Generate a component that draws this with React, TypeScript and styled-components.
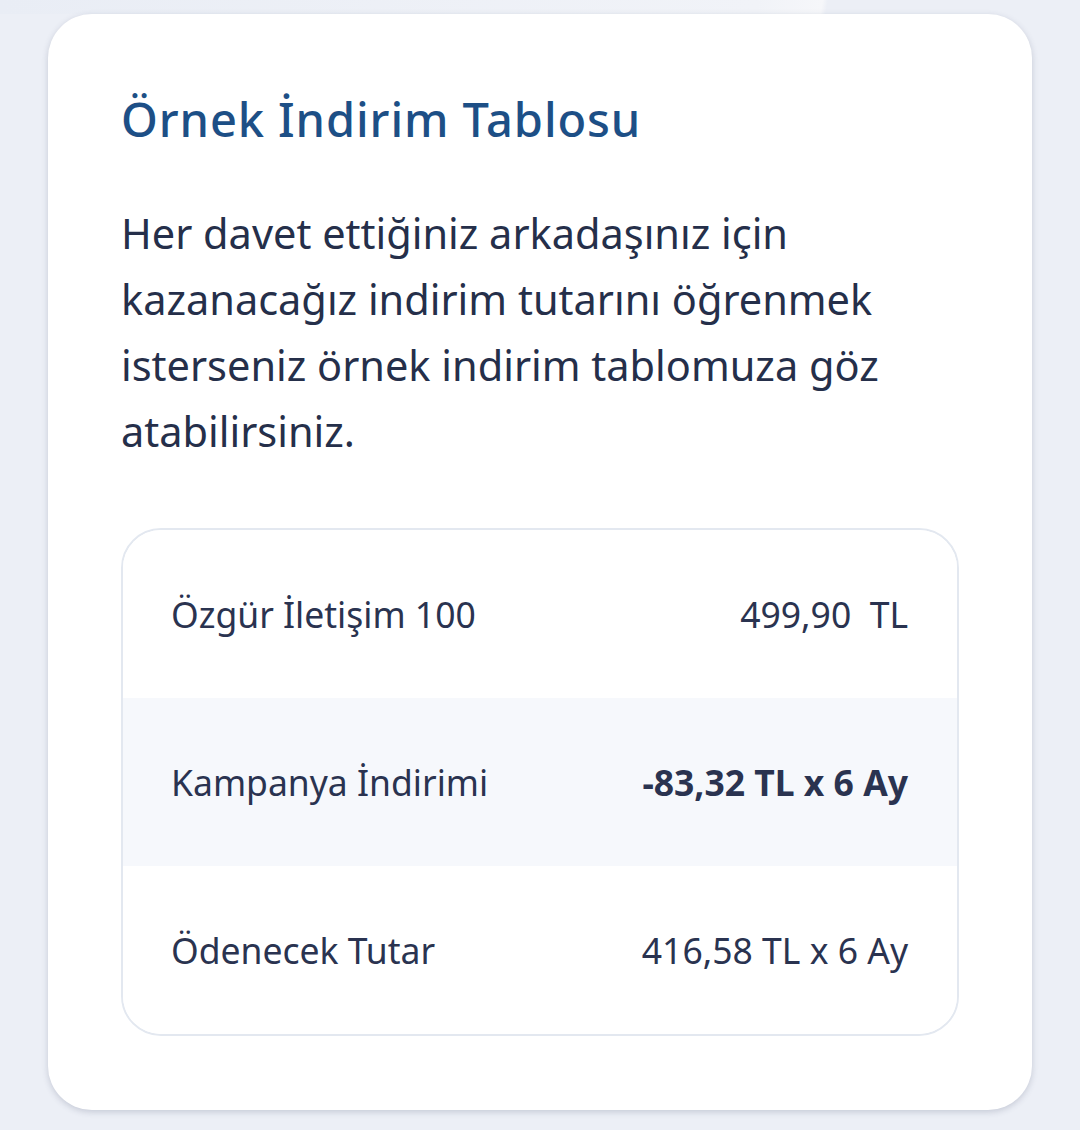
import styled, {createGlobalStyle} from 'styled-components';

const GlobalStyle = createGlobalStyle`
  html, body {
    margin: 0;
    padding: 0;
    background: #eceff6;
  }
  body {
    font-family: 'Noto Sans', 'Open Sans', sans-serif;
    color: #252f4a;
  }
`;

const Page = styled.div`
  width: 1080px;
  height: 1130px;
  padding: 14px 48px 0;
  box-sizing: border-box;
  overflow: hidden;
  background: linear-gradient(100deg, #e9edf5 0%, #f1f3f8 70%, #f6f7fa 76%, #eceff6 76.5%);
  background-size: 100% 14px;
  background-repeat: no-repeat;
  background-color: #eceff6;
`;

const Card = styled.section`
  background: #ffffff;
  border-radius: 44px;
  box-shadow: 0 2px 6px rgba(60, 70, 100, 0.22);
  padding: 75px 73px 74px;
  height: 1096px;
  box-sizing: border-box;
`;

const Title = styled.h2`
  margin: 0;
  font-size: 47px;
  font-weight: 500;
  letter-spacing: 0.9px;
  line-height: 60px;
  color: #1d4f86;
`;

const Intro = styled.p`
  margin: 51px 0 0;
  font-size: 41.5px;
  line-height: 66px;
  color: #252f4a;
  max-width: 800px;
`;

const Table = styled.div`
  margin-top: 64px;
  border: 2px solid #e3e8f0;
  border-radius: 40px;
  overflow: hidden;
  display: flex;
  flex-direction: column;
`;

const Row = styled.div<{$shaded?: boolean}>`
  display: flex;
  align-items: center;
  justify-content: space-between;
  height: 168px;
  padding: 0 49px 0 48px;
  background: ${p => (p.$shaded ? '#f6f8fc' : '#ffffff')};
`;

const Label = styled.span`
  font-size: 35.5px;
  color: #2a3350;
`;

const Value = styled.span<{$bold?: boolean}>`
  font-size: 35.5px;
  font-weight: ${p => (p.$bold ? 700 : 400)};
  color: #2a3350;
  white-space: pre;
`;

const rows = [
  {label: 'Özgür İletişim 100', value: '499,90  TL'},
  {label: 'Kampanya İndirimi', value: '-83,32 TL x 6 Ay', bold: true},
  {label: 'Ödenecek Tutar', value: '416,58 TL x 6 Ay'},
];

export default function App() {
  return (
    <>
      <GlobalStyle />
      <Page>
        <Card>
          <Title>Örnek İndirim Tablosu</Title>
          <Intro>
            Her davet ettiğiniz arkadaşınız için kazanacağız indirim tutarını
            öğrenmek isterseniz örnek indirim tablomuza göz atabilirsiniz.
          </Intro>
          <Table>
            {rows.map((r, i) => (
              <Row key={r.label} $shaded={i === 1}>
                <Label>{r.label}</Label>
                <Value $bold={r.bold}>{r.value}</Value>
              </Row>
            ))}
          </Table>
        </Card>
      </Page>
    </>
  );
}
